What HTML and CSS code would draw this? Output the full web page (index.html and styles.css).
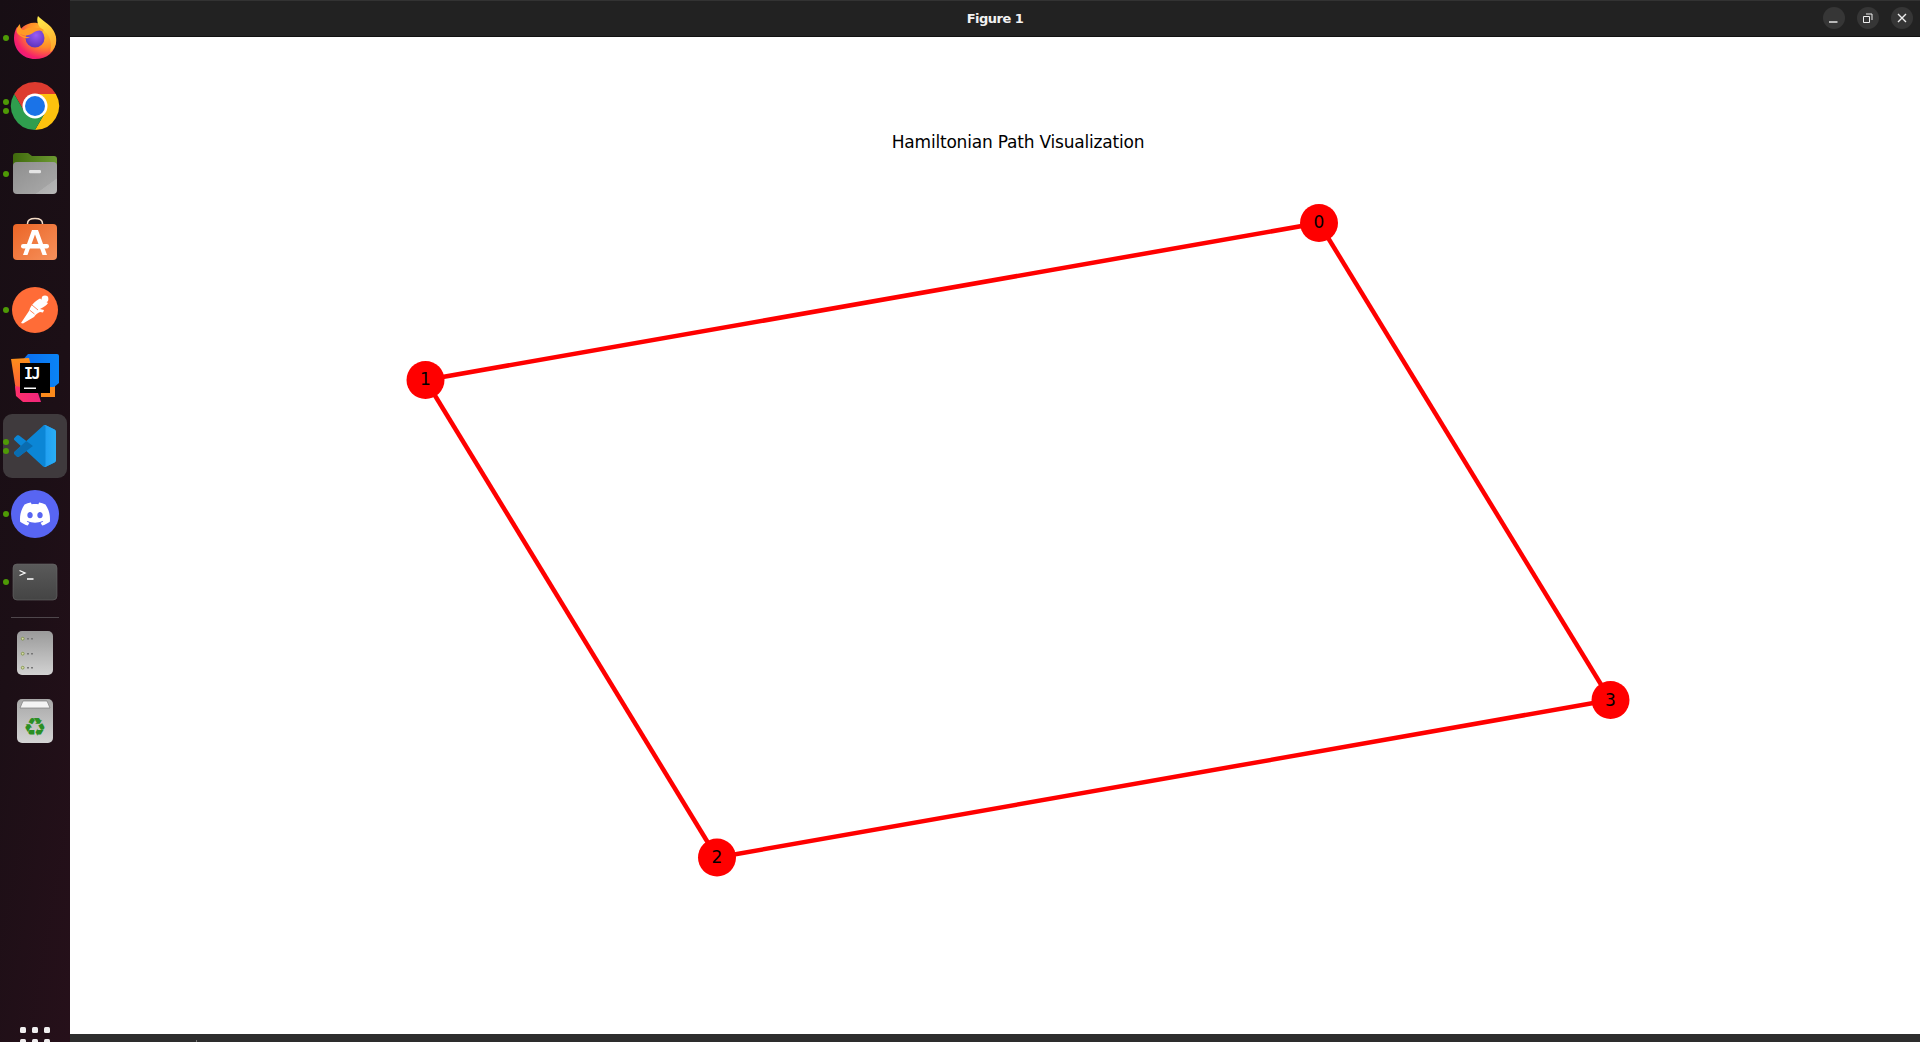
FILE: index.html
```html
<!DOCTYPE html>
<html lang="en">
<head>
<meta charset="utf-8">
<title>Figure 1</title>
<link rel="stylesheet" href="styles.css">
</head>
<body>
<div class="desktop">
  <nav class="dock">
    <div class="dock-item">
      <span class="pips"><i></i></span>
      <svg class="dock-icon" viewBox="0 0 56 56">
        <defs>
          <radialGradient id="ffBody" cx="0.75" cy="0.25" r="0.95"><stop offset="0" stop-color="#ffc82e"/><stop offset="0.45" stop-color="#ff8a28"/><stop offset="0.78" stop-color="#f5206a"/><stop offset="1" stop-color="#e3148e"/></radialGradient>
          <linearGradient id="ffFlame" x1="0.4" y1="0" x2="0.7" y2="1"><stop offset="0" stop-color="#ffe94a"/><stop offset="1" stop-color="#ffa52a"/></linearGradient>
          <radialGradient id="ffGlobe" cx="0.55" cy="0.35" r="0.8"><stop offset="0" stop-color="#9a5cf5"/><stop offset="1" stop-color="#4f2ab0"/></radialGradient>
        </defs>
        <path fill="url(#ffBody)" d="M7 28C7 24 8 20 10 17L13 20C15 17 18 15 21 14C28 11 36 14 41 19C46 24 49 24 49 30C49 42 40 49 28 49C16 49 7 40 7 28Z"/>
        <path fill="url(#ffFlame)" d="M31 6C35 10 39 12 44 17C48 22 50 27 49 33C48 38 45 41 43 42C45 36 44 30 41 25C38 20 33 19 31 14C30 11 30 8 31 6Z"/>
        <circle fill="url(#ffGlobe)" cx="28" cy="28" r="9.500"/>
        <path fill="#ff9a26" d="M13 14C13 18 15 20 17 20C20 18 24 17 30 18C35 18 38 20 36 21C32 20 28 21 26 23C22 26 17 26 13 24C15 26 19 27 23 27.500C20 29 15 28 12 25C8 22 9 18 13 14Z"/>
      </svg>
    </div>
    <div class="dock-item">
      <span class="pips"><i></i><i></i></span>
      <svg class="dock-icon" viewBox="0 0 56 56">
        <path fill="#dd3b2f" d="M7.2 16A24 24 0 0 1 48.8 16L28 16 17.6 34Z"/>
        <path fill="#fdc20e" d="M48.8 16A24 24 0 0 1 28 52L38.4 34 28 16Z"/>
        <path fill="#2f9e4e" d="M28 52A24 24 0 0 1 7.2 16L17.6 34 38.4 34Z"/>
        <circle fill="#fff" cx="28" cy="28" r="12.500"/>
        <circle fill="#1a73e8" cx="28" cy="28" r="10"/>
      </svg>
    </div>
    <div class="dock-item">
      <span class="pips"><i></i></span>
      <svg class="dock-icon" viewBox="0 0 56 56">
        <defs>
          <linearGradient id="fileBack" x1="0" y1="0" x2="1" y2="0"><stop offset="0" stop-color="#3f6a0c"/><stop offset="1" stop-color="#6d9a32"/></linearGradient>
          <linearGradient id="fileFront" x1="0" y1="0" x2="1" y2="1"><stop offset="0" stop-color="#8e8e8e"/><stop offset="0.75" stop-color="#a4a4a4"/><stop offset="0.76" stop-color="#b0b0b0"/><stop offset="1" stop-color="#b8b8b8"/></linearGradient>
        </defs>
        <path fill="url(#fileBack)" d="M6 10Q6 7 9 7H21L25 10H47Q50 10 50 13V24H6Z"/>
        <rect fill="url(#fileFront)" x="6" y="16" width="44" height="32" rx="4"/>
        <rect fill="#e4e4e4" x="22" y="24" width="12" height="3.200" rx="1.200"/>
      </svg>
    </div>
    <div class="dock-item">
      <svg class="dock-icon" viewBox="0 0 56 56">
        <defs><linearGradient id="storeBag" x1="0" y1="0" x2="1" y2="1"><stop offset="0" stop-color="#ec6526"/><stop offset="1" stop-color="#f5915c"/></linearGradient></defs>
        <path fill="none" stroke="#f5dcc6" stroke-width="1.500" d="M20.500 11V9.500Q20.500 4.500 28 4.500T35.500 9.500V11"/>
        <rect fill="url(#storeBag)" x="6" y="10" width="44" height="36" rx="4"/>
        <path fill="#fff" d="M25 16H31L40 41H35.500L28 20.500 20.500 41H16Z"/>
        <rect fill="#fff" x="14" y="30" width="28" height="4.500" rx="2.200"/>
      </svg>
    </div>
    <div class="dock-item">
      <span class="pips"><i></i></span>
      <svg class="dock-icon" viewBox="0 0 56 56">
        <circle fill="#ff6c37" cx="28" cy="28" r="23"/>
        <circle fill="#fff" cx="38" cy="17" r="3.400"/>
        <path fill="#fff" d="M33 16.500C28 19 24 23 22 29L14 41 16 41.500 27 35C29 32 31 31 33 30L36 30.500 37 28 33 27C37 25 40 23 41 21Z"/>
        <path fill="none" stroke="#ff6c37" stroke-width="0.800" d="M25 23L31 28M22.500 28L27.500 32"/>
      </svg>
    </div>
    <div class="dock-item">
      <svg class="dock-icon" viewBox="0 0 56 56">
        <defs>
          <linearGradient id="ijOrange" x1="0" y1="0" x2="0" y2="1"><stop offset="0" stop-color="#fb8f1a"/><stop offset="1" stop-color="#fd5a3a"/></linearGradient>
          <linearGradient id="ijPink" x1="0" y1="0" x2="1" y2="0"><stop offset="0" stop-color="#fd2f6a"/><stop offset="1" stop-color="#f0267c"/></linearGradient>
          <linearGradient id="ijBlue" x1="0" y1="0" x2="1" y2="0"><stop offset="0" stop-color="#0a6cf0"/><stop offset="1" stop-color="#0a84f5"/></linearGradient>
        </defs>
        <path fill="#fb8a1c" d="M34 30H48V47H34Z"/>
        <path fill="url(#ijBlue)" d="M21 4H50Q52 4 52 6V33L47 37H26L14 12Z"/>
        <path fill="url(#ijOrange)" d="M4 9L22 8 30 40 9 41Z"/>
        <path fill="url(#ijPink)" d="M8 36L30 40 34 52H16L9 46Z"/>
        <path fill="#8b3fb0" d="M30 43H43V37H30Z"/>
        <rect fill="#000" x="13" y="13" width="30" height="30"/>
        <text class="ij-text" x="17" y="28.500">IJ</text>
        <rect fill="#fff" x="17" y="37.500" width="12" height="1.500"/>
      </svg>
    </div>
    <div class="dock-item dock-item-active">
      <span class="pips"><i></i><i></i></span>
      <svg class="dock-icon" viewBox="0 0 56 56">
        <defs><linearGradient id="vsPanel" x1="0" y1="0" x2="1" y2="0"><stop offset="0" stop-color="#1f9cf0"/><stop offset="1" stop-color="#2aaef5"/></linearGradient></defs>
        <g transform="translate(7 7) scale(.42)">
          <path fill="#0b86d6" d="M70.9119 99.3171C72.4869 99.9307 74.2828 99.8914 75.8725 99.1264L96.4608 89.2197C98.6242 88.1787 100 85.9892 100 83.5872V16.4133C100 14.0113 98.6243 11.8218 96.4609 10.7808L75.8725 0.873756C73.7862 -0.130129 71.3446 0.11576 69.5135 1.44695C69.252 1.63711 69.0028 1.84943 68.769 2.08341L29.3551 38.0415L12.1872 25.0096C10.589 23.7965 8.35363 23.8959 6.86933 25.2461L1.36303 30.2549C-0.452552 31.9064 -0.454633 34.7627 1.35853 36.417L16.2471 50.0001L1.35853 63.5832C-0.454633 65.2374 -0.452552 68.0938 1.36303 69.7453L6.86933 74.7541C8.35363 76.1043 10.589 76.2037 12.1872 74.9905L29.3551 61.9587L68.769 97.9167C69.3925 98.5406 70.1246 99.0104 70.9119 99.3171ZM75.0152 27.2989L45.1091 50.0001L75.0152 72.7012V27.2989Z"/>
          <path fill="#0a6cb0" d="M16.2471 50L1.35853 63.5832C-0.454633 65.2374 -0.452552 68.0938 1.36303 69.7453L6.86933 74.7541C8.35363 76.1043 10.589 76.2037 12.1872 74.9905L29.3551 61.9587L45.1091 50L29.3551 38.0415Z"/>
          <path fill="url(#vsPanel)" d="M70.9119 99.3171C72.4869 99.9307 74.2828 99.8914 75.8725 99.1264L96.4608 89.2197C98.6242 88.1787 100 85.9892 100 83.5872V16.4133C100 14.0113 98.6243 11.8218 96.4609 10.7808L75.8725 0.873756C73.7862 -0.130129 71.3446 0.11576 69.5135 1.44695C72.5 -0.5 75 1.5 75 5V95C75 98.5 73 100 70.9119 99.3171Z"/>
        </g>
      </svg>
    </div>
    <div class="dock-item">
      <span class="pips"><i></i></span>
      <svg class="dock-icon" viewBox="0 0 56 56">
        <circle fill="#5865f2" cx="28" cy="28" r="24"/>
        <g transform="translate(13 13) scale(1.25)">
          <path fill="#fff" d="M20.317 4.3698a19.7913 19.7913 0 00-4.8851-1.5152.0741.0741 0 00-.0785.0371c-.211.3753-.4447.8648-.6083 1.2495-1.8447-.2762-3.68-.2762-5.4868 0-.1636-.3933-.4058-.8742-.6177-1.2495a.077.077 0 00-.0785-.037 19.7363 19.7363 0 00-4.8852 1.515.0699.0699 0 00-.0321.0277C.5334 9.0458-.319 13.5799.0992 18.0578a.0824.0824 0 00.0312.0561c2.0528 1.5076 4.0413 2.4228 5.9929 3.0294a.0777.0777 0 00.0842-.0276c.4616-.6304.8731-1.2952 1.226-1.9942a.076.076 0 00-.0416-.1057c-.6528-.2476-1.2743-.5495-1.8722-.8923a.077.077 0 01-.0076-.1277c.1258-.0943.2517-.1923.3718-.2914a.0743.0743 0 01.0776-.0105c3.9278 1.7933 8.18 1.7933 12.0614 0a.0739.0739 0 01.0785.0095c.1202.099.246.1981.3728.2924a.077.077 0 01-.0066.1276 12.2986 12.2986 0 01-1.873.8914.0766.0766 0 00-.0407.1067c.3604.698.7719 1.3628 1.225 1.9932a.076.076 0 00.0842.0286c1.961-.6067 3.9495-1.5219 6.0023-3.0294a.077.077 0 00.0313-.0552c.5004-5.177-.8382-9.6739-3.5485-13.6604a.061.061 0 00-.0312-.0286zM8.02 15.3312c-1.1825 0-2.1569-1.0857-2.1569-2.419 0-1.3332.9555-2.4189 2.157-2.4189 1.2108 0 2.1757 1.0952 2.1568 2.419 0 1.3332-.9555 2.4189-2.1569 2.4189zm7.9748 0c-1.1825 0-2.1569-1.0857-2.1569-2.419 0-1.3332.9554-2.4189 2.1569-2.4189 1.2108 0 2.1757 1.0952 2.1568 2.419 0 1.3332-.946 2.4189-2.1568 2.4189Z"/>
        </g>
      </svg>
    </div>
    <div class="dock-item">
      <span class="pips"><i></i></span>
      <svg class="dock-icon" viewBox="0 0 56 56">
        <defs><linearGradient id="termBg" x1="0" y1="0" x2="0" y2="1"><stop offset="0" stop-color="#5a5a5a"/><stop offset="1" stop-color="#444"/></linearGradient></defs>
        <rect fill="url(#termBg)" stroke="#6a6a6a" stroke-width="0.600" x="6" y="10" width="44" height="36" rx="4"/>
        <path fill="none" stroke="#fff" stroke-width="1.300" d="M12.500 16.500L18 19 12.500 21.500M20 25H26.500"/>
      </svg>
    </div>
    <div class="dock-separator"></div>
    <div class="dock-item">
      <svg class="dock-icon" viewBox="0 0 56 56">
        <defs><linearGradient id="diskBg" x1="0" y1="0" x2="0" y2="1"><stop offset="0" stop-color="#9a9a9a"/><stop offset="1" stop-color="#d2d2d2"/></linearGradient></defs>
        <rect fill="url(#diskBg)" x="10" y="6" width="36" height="44" rx="5"/>
        <g fill="#d8d8b0" stroke="#6f8a2a" stroke-width="0.700"><circle cx="15.700" cy="13.700" r="1.400"/><circle cx="15.700" cy="28.700" r="1.400"/><circle cx="15.700" cy="42.700" r="1.400"/></g>
        <g fill="#777"><rect x="20" y="13" width="2" height="1.500"/><rect x="24" y="13" width="2" height="1.500"/><rect x="20" y="28" width="2" height="1.500"/><rect x="24" y="28" width="2" height="1.500"/><rect x="20" y="42" width="2" height="1.500"/><rect x="24" y="42" width="2" height="1.500"/></g>
      </svg>
    </div>
    <div class="dock-item">
      <svg class="dock-icon" viewBox="0 0 56 56">
        <defs><linearGradient id="trashBg" x1="0" y1="0" x2="0" y2="1"><stop offset="0" stop-color="#a8a8a8"/><stop offset="1" stop-color="#d4d4d4"/></linearGradient></defs>
        <rect fill="url(#trashBg)" x="10" y="6" width="36" height="44" rx="5"/>
        <path fill="#f4f4f4" stroke="#7d7d7d" stroke-width="0.700" d="M16 8H40L43 15H13Z"/>
        <text class="recycle" x="28" y="43">♻</text>
      </svg>
    </div>
    <div class="dock-grid"><i></i><i></i><i></i><i></i><i></i><i></i></div>
  </nav>
  <main class="window">
    <header class="titlebar">
      <span class="title">Figure 1</span>
      <div class="controls">
        <span class="control"><svg viewBox="0 0 22 22"><path d="M6 15H14.500" stroke="#fff" stroke-width="1.300" fill="none"/></svg></span>
        <span class="control"><svg viewBox="0 0 22 22"><path d="M6.500 9.500H12.500V15.500H6.500ZM9 7H15V13" stroke="#eee" stroke-width="1" fill="none"/></svg></span>
        <span class="control"><svg viewBox="0 0 22 22"><path d="M7 7L15 15M15 7L7 15" stroke="#eee" stroke-width="1.400" fill="none"/></svg></span>
      </div>
    </header>
    <svg class="plot" viewBox="0 0 1850 997">
      <text class="plot-title" x="948" y="111">Hamiltonian Path Visualization</text>
      <g class="edges">
        <line x1="1249" y1="186" x2="355.500" y2="343"/>
        <line x1="355.500" y1="343" x2="647" y2="820.500"/>
        <line x1="647" y1="820.500" x2="1540.500" y2="663"/>
        <line x1="1540.500" y1="663" x2="1249" y2="186"/>
      </g>
      <g class="nodes">
        <circle cx="1249" cy="186" r="19"/>
        <circle cx="355.500" cy="343" r="19"/>
        <circle cx="647" cy="820.500" r="19"/>
        <circle cx="1540.500" cy="663" r="19"/>
      </g>
      <g class="labels">
        <text x="1249" y="191">0</text>
        <text x="355.500" y="348">1</text>
        <text x="647" y="826">2</text>
        <text x="1540.500" y="669">3</text>
      </g>
    </svg>
    <footer class="statusbar"></footer>
  </main>
</div>
</body>
</html>
```

FILE: styles.css
```css
html, body {
  margin: 0;
  height: 100%;
  overflow: hidden;
}

.desktop {
  display: flex;
  width: 1920px;
  height: 1042px;
  font-family: "DejaVu Sans", sans-serif;
}

.dock {
  flex: 0 0 70px;
  height: 1042px;
  overflow: hidden;
  display: flex;
  flex-direction: column;
  align-items: center;
  padding-top: 4px;
  box-sizing: border-box;
  background: linear-gradient(100deg, #170e14 0%, #1c0f16 50%, #26101a 100%);
}

.dock-item {
  position: relative;
  flex: 0 0 68px;
  width: 70px;
  display: flex;
  align-items: center;
  justify-content: center;
}

.dock-icon {
  width: 56px;
  height: 56px;
  display: block;
}

.dock-item-active::before {
  content: "";
  position: absolute;
  left: 3px;
  top: 2px;
  width: 64px;
  height: 64px;
  border-radius: 9px;
  background: #3f3a3d;
}

.dock-item-active .dock-icon {
  position: relative;
}

.pips {
  position: absolute;
  z-index: 1;
  left: 3px;
  top: 0;
  bottom: 0;
  display: flex;
  flex-direction: column;
  justify-content: center;
  gap: 3px;
}

.pips i {
  display: block;
  width: 6px;
  height: 6px;
  border-radius: 50%;
  background: #4e9a06;
}

.dock-separator {
  flex: 0 0 1px;
  width: 48px;
  margin: 1px 0;
  background: #4f474c;
}

.dock-grid {
  margin-top: auto;
  margin-bottom: -3px;
  display: grid;
  grid-template-columns: repeat(3, 6px);
  grid-auto-rows: 6px;
  gap: 6px;
}

.dock-grid i {
  display: block;
  border-radius: 1.500px;
  background: #f0eeef;
}

.ij-text {
  fill: #fff;
  font-family: "DejaVu Sans Mono", monospace;
  font-weight: 700;
  font-size: 15px;
  letter-spacing: -1.500px;
}

.recycle {
  fill: #2a8f24;
  font-family: "DejaVu Sans", sans-serif;
  font-size: 26px;
  text-anchor: middle;
}

.window {
  flex: 1;
  min-width: 0;
  display: flex;
  flex-direction: column;
  background: #fff;
}

.titlebar {
  position: relative;
  flex: 0 0 37px;
  box-sizing: border-box;
  display: flex;
  align-items: center;
  justify-content: center;
  background: #222;
  border-top: 1px solid #333;
  border-bottom: 1px solid #111;
}

.title {
  color: #f2f2f2;
  font-size: 13px;
  font-weight: 700;
  letter-spacing: -0.500px;
}

.controls {
  position: absolute;
  right: 7px;
  top: 6px;
  display: flex;
  gap: 12px;
}

.control {
  width: 22px;
  height: 22px;
  border-radius: 50%;
  background: #363636;
}

.control svg {
  display: block;
  width: 22px;
  height: 22px;
}

.plot {
  flex: 1;
  min-height: 0;
  display: block;
  width: 100%;
}

.plot-title {
  fill: #000;
  font-size: 17px;
  letter-spacing: -0.200px;
  text-anchor: middle;
}

.edges line {
  stroke: #f00;
  stroke-width: 4.500;
}

.nodes circle {
  fill: #f00;
}

.labels text {
  fill: #000;
  font-size: 17px;
  text-anchor: middle;
}

.statusbar {
  position: relative;
  flex: 0 0 8px;
  background: #2d2d2d;
}

.statusbar::after {
  content: "";
  position: absolute;
  left: 126px;
  top: 6px;
  width: 1px;
  height: 2px;
  background: #777;
}
```
